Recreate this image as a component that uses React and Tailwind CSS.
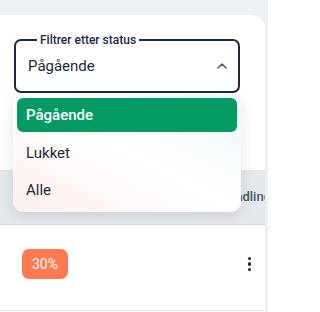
import React from "react";

function ChevronUp() {
  return (
    <svg width="12" height="8" viewBox="0 0 12 8" fill="none">
      <path d="M2 6l4-4 4 4" stroke="#4b5563" strokeWidth="1.5" strokeLinecap="round" strokeLinejoin="round" />
    </svg>
  );
}

function Kebab() {
  return (
    <div className="flex flex-col gap-[2px]">
      <span className="w-[3.5px] h-[3.5px] rounded-full bg-[#1e293b]"></span>
      <span className="w-[3.5px] h-[3.5px] rounded-full bg-[#1e293b]"></span>
      <span className="w-[3.5px] h-[3.5px] rounded-full bg-[#1e293b]"></span>
    </div>
  );
}

const options = ["Pågående", "Lukket", "Alle"];

export default function App() {
  return (
    <div className="w-[268px] h-[312px] overflow-hidden bg-[#eef1f4] pt-[15px] font-['Roboto',sans-serif]">
      <div className="relative w-[265px] h-[400px] bg-white rounded-tr-[14px] overflow-hidden pt-[18px]">
        <fieldset className="mx-[14px] w-[226px] h-[60px] border-2 border-[#1e293b] rounded-[7px] px-[12px] pb-[5px] flex items-center justify-between">
          <legend className="ml-[9px] px-[3px] text-[12px] font-medium text-[#1e293b] leading-[14px]">Filtrer etter status</legend>
          <span className="text-[15px] text-[#1e293b] -mt-[1px]">Pågående</span>
          <span className="-mt-[1px] mr-[-2px]"><ChevronUp /></span>
        </fieldset>

        <div className="mt-[77px] h-[55px] bg-[#e5e9ed] border-b border-[#d5dae1] flex items-center pl-[219px] text-[13px] font-medium text-[#4b5563] whitespace-nowrap">
          <span>Handling</span>
        </div>

        <div className="h-[86px] border-b border-[#e2e6eb] flex items-center justify-between pl-[22px] pr-[14px] pb-[7px]">
          <span className="h-[30px] px-[10px] rounded-[7px] bg-[#ff7a50] text-white text-[14px] flex items-center">30%</span>
          <Kebab />
        </div>

        <div className="absolute left-[13px] top-[80px] w-[228px] rounded-[10px] bg-gradient-to-tr from-[#fdf0ee] via-white to-[#eef7fb] shadow-[0_4px_14px_rgba(15,23,42,0.12)] px-[4px] pt-[3px] pb-[6px] flex flex-col gap-[3px]">
          {options.map((o, i) => (
            <div
              key={o}
              className={
                i === 0
                  ? "h-[34px] rounded-[6px] bg-[#039b62] text-white font-medium text-[15px] flex items-center pl-[9px]"
                  : "h-[34px] rounded-[6px] text-[#1f2937] text-[15px] flex items-center pl-[9px] pt-[3px]"
              }
            >
              {o}
            </div>
          ))}
        </div>
      </div>
    </div>
  );
}
